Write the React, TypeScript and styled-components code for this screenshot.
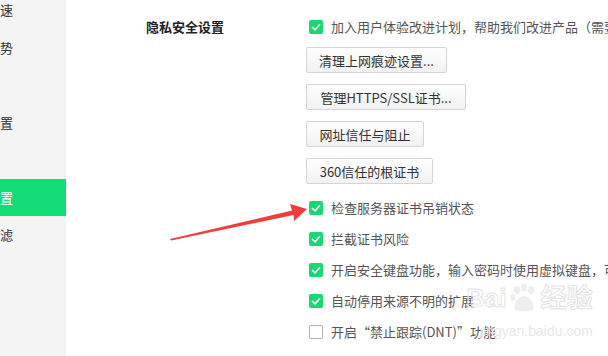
import styled, { createGlobalStyle } from "styled-components";

const GlobalStyle = createGlobalStyle`
  html, body {
    margin: 0;
    padding: 0;
    background: #ffffff;
    overflow: hidden;
  }
  body {
    font-family: "Noto Sans CJK SC", "Noto Sans", sans-serif;
  }
`;

const Page = styled.div`
  position: relative;
  display: flex;
  width: 608px;
  height: 356px;
  overflow: hidden;
  background: #fff;
`;

const Sidebar = styled.div`
  flex: 0 0 66px;
  background: #f4f4f4;
  display: flex;
  flex-direction: column;
  margin-top: -9px;
`;

const NavItem = styled.div<{ $active?: boolean }>`
  height: 37.5px;
  flex: 0 0 37.5px;
  display: flex;
  align-items: center;
  background: ${(p) => (p.$active ? "#13dc76" : "transparent")};
  color: ${(p) => (p.$active ? "#ffffff" : "#333333")};
  font-size: 13px;
`;

const NavLabel = styled.div`
  width: 13px;
  display: flex;
  justify-content: flex-end;
  overflow: hidden;
  white-space: nowrap;
`;

const Main = styled.div`
  flex: 1;
  display: grid;
  grid-template-columns: 160px 1fr;
  align-content: start;
  padding: 11px 0 0 80px;
  min-width: 0;
`;

const SectionTitle = styled.div`
  height: 31px;
  line-height: 31px;
  font-size: 13px;
  font-weight: bold;
  color: #222;
  white-space: nowrap;
`;

const Controls = styled.div`
  display: flex;
  flex-direction: column;
  min-width: 0;
`;

const CheckRow = styled.div`
  height: 31px;
  display: flex;
  align-items: center;
  gap: 8px;
  padding-left: 3px;
  font-size: 13px;
  color: #555;
  white-space: nowrap;
`;

const Box = styled.span<{ $checked?: boolean }>`
  flex: 0 0 auto;
  width: 14px;
  height: 14px;
  box-sizing: border-box;
  border-radius: 2px;
  display: flex;
  align-items: center;
  justify-content: center;
  background: ${(p) => (p.$checked ? "#19d874" : "#fff")};
  border: ${(p) => (p.$checked ? "none" : "1px solid #b5b5b5")};
`;

const ButtonGroup = styled.div`
  display: flex;
  flex-direction: column;
  align-items: flex-start;
  gap: 11px;
  margin: 5px 0 8px;
`;

const Button = styled.div<{ $w: number }>`
  width: ${(p) => p.$w}px;
  height: 26px;
  box-sizing: border-box;
  display: flex;
  align-items: center;
  justify-content: center;
  border: 1px solid #d4d4d4;
  border-radius: 2px;
  background: linear-gradient(#fefefe, #f2f2f2);
  font-size: 13px;
  color: #333;
  white-space: nowrap;
`;

const Arrow = styled.svg`
  position: absolute;
  left: 0;
  top: 0;
  pointer-events: none;
`;

const Watermark = styled.div`
  position: absolute;
  left: 466px;
  top: 283px;
  display: flex;
  flex-direction: column;
  align-items: center;
  color: transparent;
  pointer-events: none;
`;

const MarkTop = styled.div`
  display: flex;
  align-items: center;
  gap: 2px;
  font-family: "Liberation Sans", "Noto Sans CJK SC", sans-serif;
  font-size: 26px;
  font-weight: bold;
  -webkit-text-stroke: 1px #e4e4e4;
  line-height: 30px;
`;

const MarkSub = styled.div`
  font-family: "Liberation Sans", sans-serif;
  font-size: 14px;
  color: #e8e8e8;
  margin-left: 14px;
  margin-top: 10px;
`;

const Tick = () => (
  <svg width="10" height="8" viewBox="0 0 10 8">
    <path d="M1 4 L4 6.8 L9 1.2" fill="none" stroke="#fff" strokeWidth="1.6" />
  </svg>
);

const Paw = () => (
  <svg width="30" height="30" viewBox="0 0 30 30">
    <g fill="#eeeeee">
      <ellipse cx="8" cy="7" rx="3" ry="4" />
      <ellipse cx="15" cy="4.5" rx="3" ry="4" />
      <ellipse cx="22" cy="7" rx="3" ry="4" />
      <ellipse cx="4" cy="14" rx="2.6" ry="3.4" />
      <path d="M6 26 C4 20 10 13 15 13 C20 13 26 20 24 26 C22 29 8 29 6 26 Z" />
    </g>
  </svg>
);

const navItems = [
  { label: "网页加速" },
  { label: "优化趋势" },
  { label: "" },
  { label: "标签设置" },
  { label: "" },
  { label: "安全设置", active: true },
  { label: "广告过滤" },
];

const buttons = [
  { text: "清理上网痕迹设置...", w: 141 },
  { text: "管理HTTPS/SSL证书...", w: 160 },
  { text: "网址信任与阻止", w: 118 },
  { text: "360信任的根证书", w: 127 },
];

const options = [
  { text: "检查服务器证书吊销状态", checked: true },
  { text: "拦截证书风险", checked: true },
  { text: "开启安全键盘功能，输入密码时使用虚拟键盘，可防止键盘记录", checked: true },
  { text: "自动停用来源不明的扩展", checked: true },
  { text: "开启“禁止跟踪(DNT)”功能", checked: false },
];

export default function App() {
  return (
    <>
      <GlobalStyle />
      <Page>
        <Sidebar>
          {navItems.map((item, i) => (
            <NavItem key={i} $active={item.active}>
              <NavLabel>{item.label}</NavLabel>
            </NavItem>
          ))}
        </Sidebar>
        <Main>
          <SectionTitle>隐私安全设置</SectionTitle>
          <Controls>
            <CheckRow>
              <Box $checked><Tick /></Box>
              加入用户体验改进计划，帮助我们改进产品（需要联网）
            </CheckRow>
            <ButtonGroup>
              {buttons.map((b) => (
                <Button key={b.text} $w={b.w}>{b.text}</Button>
              ))}
            </ButtonGroup>
            {options.map((o) => (
              <CheckRow key={o.text}>
                <Box $checked={o.checked}>{o.checked && <Tick />}</Box>
                {o.text}
              </CheckRow>
            ))}
          </Controls>
        </Main>
        <Watermark>
          <MarkTop>
            <span>Bai</span>
            <Paw />
            <span>经验</span>
          </MarkTop>
          <MarkSub>jingyan.baidu.com</MarkSub>
        </Watermark>
        <Arrow width="608" height="356" viewBox="0 0 608 356">
          <polygon
            points="170,239 292,210.5 290,204 307,209 294,221 293.5,215 171,240.5"
            fill="#f23b3b"
          />
        </Arrow>
      </Page>
    </>
  );
}
